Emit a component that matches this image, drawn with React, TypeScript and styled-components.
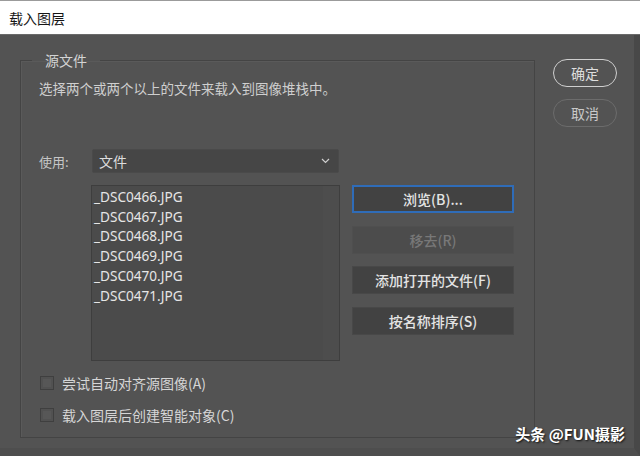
import styled, { createGlobalStyle } from "styled-components";

const GlobalStyle = createGlobalStyle`
  html, body {
    margin: 0;
    padding: 0;
    background: #535353;
  }
  #root {
    width: 640px;
    height: 456px;
  }
`;

const cjk = `"Noto Sans CJK SC", "Noto Sans", sans-serif`;
const latin = `"Noto Sans", "Noto Sans CJK SC", sans-serif`;

const Window = styled.div`
  position: relative;
  width: 640px;
  height: 456px;
  display: flex;
  flex-direction: column;
  background: #535353;
  overflow: hidden;
  font-family: ${cjk};
`;

const TitleBar = styled.div`
  box-sizing: border-box;
  height: 35px;
  flex-shrink: 0;
  display: flex;
  align-items: center;
  padding-left: 9px;
  background: #ffffff;
  border-top: 1px solid #9b9b9b;
  border-bottom: 1px solid #6a6a6a;
  color: #151515;
  font-size: 14px;
`;

const Body = styled.div`
  flex: 1;
  display: flex;
  align-items: flex-start;
  padding: 15px 0 0 20px;
  border-right: 6px solid #484848;
  border-bottom: 8px solid #4e4e4e;
`;

const Group = styled.fieldset`
  box-sizing: border-box;
  width: 515px;
  height: 388px;
  margin: 0;
  padding: 0;
  min-width: 0;
  border: 1px solid #444444;
  box-shadow: inset 1px 1px 0 #5a5a5a;
`;

const Legend = styled.legend`
  margin-left: 11px;
  padding: 0 13px;
  font-size: 14px;
  line-height: 20px;
  color: #d4d4d4;
`;

const Inner = styled.div`
  padding: 9px 0 0 18px;
`;

const Description = styled.div`
  font-size: 13.5px;
  line-height: 18px;
  color: #cfcfcf;
  white-space: nowrap;
`;

const UseRow = styled.div`
  display: flex;
  align-items: center;
  margin-top: 52px;
  height: 24px;
`;

const FieldLabel = styled.div`
  width: 53px;
  font-size: 13px;
  color: #c6c6c6;
`;

const Select = styled.div`
  box-sizing: border-box;
  width: 247px;
  height: 24px;
  display: flex;
  align-items: center;
  justify-content: space-between;
  padding: 0 8px 0 6px;
  background: #464646;
  border: 1px solid #4a4a4a;
  border-radius: 2px;
  color: #dddddd;
  font-size: 14px;
`;

const MiddleRow = styled.div`
  display: flex;
  margin-top: 12px;
`;

const FileList = styled.div`
  box-sizing: border-box;
  width: 249px;
  height: 176px;
  margin-left: 52px;
  padding: 1px 0 0 2px;
  background: #4b4b4b;
  border: 1px solid #3e3e3e;
  box-shadow: inset -16px 0 0 #4d4d4d;
`;

const FileItem = styled.div`
  font-family: ${latin};
  font-size: 13.6px;
  line-height: 19.7px;
  color: #e6e6e6;
`;

const ActionColumn = styled.div`
  display: flex;
  flex-direction: column;
  gap: 12.5px;
  margin-left: 12px;
  width: 162px;
`;

const ActionButton = styled.div<{ $focused?: boolean; $disabled?: boolean }>`
  box-sizing: border-box;
  height: 28px;
  display: flex;
  align-items: center;
  justify-content: center;
  background: ${(p) => (p.$disabled ? "#4c4c4c" : "#424242")};
  border: ${(p) =>
    p.$focused
      ? "2px solid #2f6cb8"
      : p.$disabled
      ? "1px solid #4f4f4f"
      : "1px solid #484848"};
  color: ${(p) => (p.$disabled ? "#787878" : "#e4e4e4")};
  font-size: 14px;
  font-weight: 500;
`;

const CheckRow = styled.div`
  display: flex;
  align-items: center;
  gap: 8px;
  height: 20px;
  margin-top: 12px;
  padding-left: 1px;
  font-size: 14px;
  color: #d6d6d6;
`;

const CheckBox = styled.span`
  box-sizing: border-box;
  width: 14px;
  height: 14px;
  border: 1px solid #3f3f3f;
  background: #575757;
  box-shadow: inset 0 0 0 2px #515151;
`;

const SideColumn = styled.div`
  display: flex;
  flex-direction: column;
  gap: 12px;
  margin: 9px 0 0 18px;
`;

const PillButton = styled.div<{ $primary?: boolean }>`
  box-sizing: border-box;
  width: 64px;
  height: 28px;
  display: flex;
  align-items: center;
  justify-content: center;
  border-radius: 14px;
  border: 1.5px solid ${(p) => (p.$primary ? "#cfcfcf" : "#6c6c6c")};
  color: ${(p) => (p.$primary ? "#dedede" : "#c9c9c9")};
  font-size: 14px;
`;

const Watermark = styled.div`
  position: absolute;
  right: 15px;
  bottom: 12px;
  font-size: 15px;
  line-height: 20px;
  font-weight: 700;
  color: #ffffff;
  text-shadow: 1px 1px 2px rgba(0, 0, 0, 0.8);
  font-family: ${cjk};
`;

const files = [
  "_DSC0466.JPG",
  "_DSC0467.JPG",
  "_DSC0468.JPG",
  "_DSC0469.JPG",
  "_DSC0470.JPG",
  "_DSC0471.JPG",
];

const App = () => {
  return (
    <>
      <GlobalStyle />
      <Window>
        <TitleBar>载入图层</TitleBar>
        <Body>
          <Group>
            <Legend>源文件</Legend>
            <Inner>
              <Description>选择两个或两个以上的文件来载入到图像堆栈中。</Description>
              <UseRow>
                <FieldLabel>使用:</FieldLabel>
                <Select>
                  <span>文件</span>
                  <svg width="9" height="6" viewBox="0 0 9 6">
                    <polyline
                      points="1,1 4.5,4.5 8,1"
                      fill="none"
                      stroke="#cfcfcf"
                      strokeWidth="1.2"
                    />
                  </svg>
                </Select>
              </UseRow>
              <MiddleRow>
                <FileList>
                  {files.map((f) => (
                    <FileItem key={f}>{f}</FileItem>
                  ))}
                </FileList>
                <ActionColumn>
                  <ActionButton $focused>浏览(B)...</ActionButton>
                  <ActionButton $disabled>移去(R)</ActionButton>
                  <ActionButton>添加打开的文件(F)</ActionButton>
                  <ActionButton>按名称排序(S)</ActionButton>
                </ActionColumn>
              </MiddleRow>
              <CheckRow>
                <CheckBox />
                尝试自动对齐源图像(A)
              </CheckRow>
              <CheckRow>
                <CheckBox />
                载入图层后创建智能对象(C)
              </CheckRow>
            </Inner>
          </Group>
          <SideColumn>
            <PillButton $primary>确定</PillButton>
            <PillButton>取消</PillButton>
          </SideColumn>
        </Body>
        <Watermark>头条 @FUN摄影</Watermark>
      </Window>
    </>
  );
};

export default App;
